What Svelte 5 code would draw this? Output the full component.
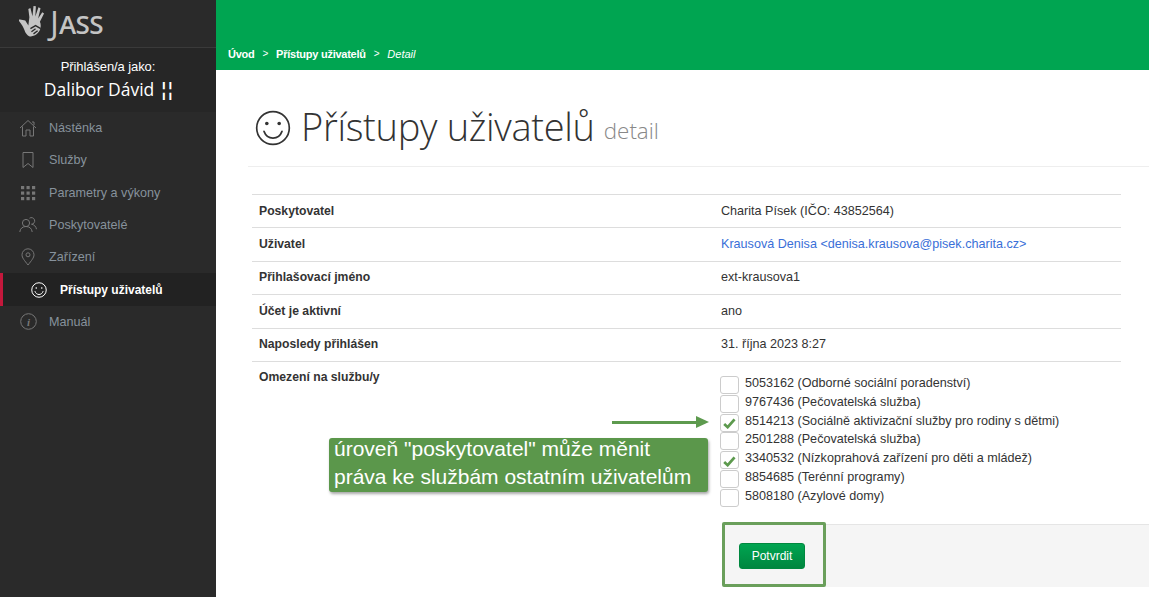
<script>
  const nav = [
    { label: 'Nástěnka', icon: 'home' },
    { label: 'Služby', icon: 'bookmark' },
    { label: 'Parametry a výkony', icon: 'grid' },
    { label: 'Poskytovatelé', icon: 'people' },
    { label: 'Zařízení', icon: 'pin' },
    { label: 'Přístupy uživatelů', icon: 'smile', active: true },
    { label: 'Manuál', icon: 'info' }
  ];
  const rows = [
    ['Poskytovatel', 'Charita Písek (IČO: 43852564)'],
    ['Uživatel', 'Krausová Denisa <denisa.krausova@pisek.charita.cz>', true],
    ['Přihlašovací jméno', 'ext-krausova1'],
    ['Účet je aktivní', 'ano'],
    ['Naposledy přihlášen', '31. října 2023 8:27']
  ];
  const services = [
    ['5053162 (Odborné sociální poradenství)', false],
    ['9767436 (Pečovatelská služba)', false],
    ['8514213 (Sociálně aktivizační služby pro rodiny s dětmi)', true],
    ['2501288 (Pečovatelská služba)', false],
    ['3340532 (Nízkoprahová zařízení pro děti a mládež)', true],
    ['8854685 (Terénní programy)', false],
    ['5808180 (Azylové domy)', false]
  ];
</script>

{#snippet smile(size, sw)}
  <svg width={size} height={size} viewBox="0 0 32 32" fill="none" stroke="currentColor" stroke-width={sw}>
    <circle cx="16" cy="16" r="14.5" />
    <circle cx="10.5" cy="12" r="1.6" fill="currentColor" stroke="none" />
    <circle cx="21.5" cy="12" r="1.6" fill="currentColor" stroke="none" />
    <path d="M8 19c1.5 4 4.5 6 8 6s6.5-2 8-6" stroke-linecap="round" />
  </svg>
{/snippet}

{#snippet navIcon(name)}
  {#if name === 'home'}
    <svg width="18" height="18" viewBox="0 0 18 18" fill="none" stroke="currentColor"><path d="M1 9 9 1.500 17 9M3.500 7.500v9.500h3.500v-6h4v6h3.500V7.500M13 3h2v3" /></svg>
  {:else if name === 'bookmark'}
    <svg width="18" height="18" viewBox="0 0 18 18" fill="none" stroke="currentColor"><path d="M4 1.500h10v15l-5-4-5 4z" /></svg>
  {:else if name === 'grid'}
    <svg width="16" height="16" viewBox="0 0 16 16" fill="currentColor">
      {#each [1, 6.5, 12] as y}
        {#each [1, 6.5, 12] as x}
          <rect {x} {y} width="3.2" height="3.2" />
        {/each}
      {/each}
    </svg>
  {:else if name === 'people'}
    <svg width="18" height="18" viewBox="0 0 18 18" fill="none" stroke="currentColor"><circle cx="7" cy="7" r="3.6" /><path d="M.8 16c.3-3.500 2.800-5.500 6.200-5.500s5.900 2 6.200 5.500M10.500 2.200a3.300 3.300 0 1 1 2 6c2.700.5 4.500 2.200 5 5" /></svg>
  {:else if name === 'pin'}
    <svg width="18" height="18" viewBox="0 0 18 18" fill="none" stroke="currentColor"><path d="M9 17C5.500 12.500 3 9.800 3 6.800a6 6 0 0 1 12 0c0 3-2.500 5.700-6 10.200z" /><circle cx="9" cy="6.800" r="2" /></svg>
  {:else if name === 'smile'}
    {@render smile(16, 2)}
  {:else}
    <svg width="17" height="17" viewBox="0 0 17 17" fill="none" stroke="currentColor"><circle cx="8.500" cy="8.500" r="7.800" /><text x="8.500" y="12.500" text-anchor="middle" font-family="Liberation Serif, serif" font-style="italic" font-weight="700" font-size="11" fill="currentColor" stroke="none">i</text></svg>
  {/if}
{/snippet}

<div class="page">
  <aside class="sidebar">
    <div class="logo">
      <svg class="hand" width="29" height="33" viewBox="0 0 28 32" fill="#c4c4c4">
        <path d="M1 13l5 1 3 5 1-8-1-8 2-1 2 8 1-10 2.300.300-.500 10 3-9 2 .800-2.300 10 4-6 1.700 1.200-4 8c1.500 3 1 8-2 11-2.500 3-6 3.500-8.500 3-2-1-3.500-3-4.500-6-1-3-3-6-6.200-10z" />
        <path d="M11 22l5-3 5 3M12 25l4-3M14 27l4-3" fill="none" stroke="#2a2a2a" stroke-width="1.300" />
      </svg>
      <span class="logo-j">J</span><span class="logo-text">ASS</span>
    </div>
    <div class="who">
      <div class="who-label">Přihlášen/a jako:</div>
      <div class="who-name">Dalibor Dávid <span class="dashes">¦¦</span></div>
    </div>
    <nav>
      {#each nav as item}
        <div class="nav-item" class:active={item.active}>
          <span class="nav-icon">{@render navIcon(item.icon)}</span>
          <span>{item.label}</span>
        </div>
      {/each}
    </nav>
  </aside>

  <main>
    <header class="topbar">
      <div class="crumbs">
        <b>Úvod</b><span class="sep">&gt;</span><b>Přístupy uživatelů</b><span class="sep">&gt;</span><i>Detail</i>
      </div>
    </header>

    <div class="content">
      <div class="title-row">
        <span class="title-icon">{@render smile(36, 1.5)}</span>
        <h1>Přístupy uživatelů</h1>
        <small>detail</small>
      </div>

      <div class="table">
        {#each rows as row}
          <div class="row">
            <div class="th">{row[0]}</div>
            <div class="td" class:link={row[2]}>{row[1]}</div>
          </div>
        {/each}
        <div class="row last">
          <div class="th">Omezení na službu/y</div>
          <div class="td services">
            {#each services as s}
              <div class="service">
                <span class="check">
                  {#if s[1]}
                    <svg width="13" height="11" viewBox="0 0 14 12" fill="none" stroke="#5d9a4e" stroke-width="3"><path d="M1.200 6.500 5 10l7.500-8.500" /></svg>
                  {/if}
                </span>
                <span class="service-text">{s[0]}</span>
              </div>
            {/each}
          </div>
        </div>
      </div>

      <div class="actions">
        <button>Potvrdit</button>
      </div>
    </div>

    <div class="arrow"></div>
    <div class="note"><div class="note-text">úroveň "poskytovatel" může měnit<br />práva ke službám ostatním uživatelům</div></div>
    <div class="highlight"></div>
  </main>
</div>

<style>
  :global(body) {
    margin: 0;
    background: #fff;
  }
  .page {
    display: flex;
    width: 1149px;
    height: 597px;
    overflow: hidden;
    font-family: "Liberation Sans", Arial, sans-serif;
    font-size: 12.6px;
    color: #333;
  }
  .sidebar {
    width: 216px;
    flex: none;
    background: #2a2a2a;
  }
  .logo {
    height: 48px;
    display: flex;
    align-items: center;
    padding: 0 0 3px 19px;
    box-sizing: border-box;
    border-bottom: 1px solid #3a3a3a;
    color: #c4c4c4;
    font-family: "Open Sans", sans-serif;
  }
  .hand {
    margin-right: 2px;
  }
  .logo-j {
    font-size: 33px;
    line-height: 1;
  }
  .logo-text {
    font-size: 26px;
    font-weight: 600;
    line-height: 1;
    letter-spacing: -0.5px;
    margin-top: 3px;
  }
  .who {
    height: 64px;
    box-sizing: border-box;
    padding-top: 11px;
    text-align: center;
    color: #fff;
    background: #262626;
  }
  .who-label {
    font-size: 13px;
    line-height: 15px;
    letter-spacing: -0.1px;
  }
  .who-name {
    font-family: "Open Sans", sans-serif;
    font-size: 17.5px;
    line-height: 26px;
    margin-top: 2px;
  }
  .dashes {
    letter-spacing: -3px;
    font-weight: 700;
    color: #fff;
  }
  .nav-item {
    height: 32.3px;
    display: flex;
    align-items: center;
    padding-left: 19px;
    color: #87929c;
    box-sizing: border-box;
    position: relative;
  }
  .nav-icon {
    width: 18px;
    display: flex;
    justify-content: center;
    margin-right: 12px;
    color: #777;
  }
  .nav-item.active {
    background: #222;
    color: #fff;
    font-weight: 700;
    font-size: 12px;
    padding-left: 30px;
  }
  .nav-item.active::before {
    content: "";
    position: absolute;
    left: 0;
    top: 0;
    bottom: 0;
    width: 3px;
    background: #c4183c;
  }
  .nav-item.active .nav-icon {
    color: #fff;
    margin-right: 12px;
  }
  main {
    flex: 1;
    position: relative;
    min-width: 0;
  }
  .topbar {
    height: 70px;
    background: #00a551;
    display: flex;
    align-items: flex-end;
    box-sizing: border-box;
    padding: 0 0 9px 12px;
  }
  .crumbs {
    color: #fff;
    font-size: 11px;
    line-height: 14px;
    display: flex;
    letter-spacing: -0.25px;
  }
  .crumbs i {
    letter-spacing: 0;
  }
  .sep {
    margin: 0 8px;
    font-size: 10px;
  }
  .content {
    padding: 29px 0 0 32px;
  }
  .title-row {
    height: 67px;
    border-bottom: 1px solid #eee;
    display: flex;
    align-items: flex-start;
    padding-left: 7px;
    color: #333;
  }
  .title-icon {
    margin-top: 11px;
    margin-right: 10px;
    display: flex;
  }
  h1 {
    margin: 0;
    font-family: "Open Sans", sans-serif;
    font-weight: 300;
    font-size: 38px;
    line-height: 54px;
    letter-spacing: -0.3px;
  }
  small {
    font-family: "Open Sans", sans-serif;
    font-weight: 300;
    font-size: 22.4px;
    color: #888;
    margin: 17px 0 0 9px;
    line-height: 30px;
  }
  .table {
    margin: 27px 28px 0 4px;
    border-top: 1px solid #ddd;
  }
  .row {
    display: flex;
    height: 33.4px;
    box-sizing: border-box;
    border-bottom: 1px solid #ddd;
    align-items: center;
    padding-bottom: 1px;
  }
  .row.last {
    height: auto;
    border-bottom: 0;
    align-items: flex-start;
    padding-bottom: 0;
  }
  .th {
    width: 462px;
    padding-left: 7px;
    box-sizing: border-box;
    font-weight: 700;
    font-size: 12.2px;
    flex: none;
    color: #333;
  }
  .last .th {
    padding-top: 8px;
  }
  .td {
    padding-left: 7px;
  }
  .link {
    color: #3a6fd8;
  }
  .services {
    padding: 14px 0 0 6px;
  }
  .service {
    display: flex;
    height: 18.8px;
    align-items: flex-start;
  }
  .check {
    width: 19px;
    height: 18px;
    border: 1px solid #ccc;
    border-radius: 3px;
    background: #fff;
    box-sizing: border-box;
    display: flex;
    align-items: center;
    justify-content: center;
    flex: none;
    margin-right: 5px;
    padding-top: 2px;
  }
  .service-text {
    line-height: 14px;
    color: #333;
    margin-left: 1px;
  }
  .actions {
    margin: 16px 0 0 475px;
    height: 63px;
    background: #f5f5f5;
    border-top: 1px solid #e5e5e5;
    box-sizing: border-box;
    padding: 18px 0 0 16px;
  }
  button {
    display: block;
    width: 66px;
    height: 26px;
    padding: 0;
    border: 1px solid #00883f;
    border-radius: 3px;
    background: linear-gradient(#00a551, #00863f);
    color: #fff;
    font: 12px "Liberation Sans", Arial, sans-serif;
  }
  .arrow {
    position: absolute;
    left: 396px;
    top: 421px;
    width: 85px;
    height: 3px;
    background: #5d9a4e;
  }
  .arrow::after {
    content: "";
    position: absolute;
    left: 84px;
    top: -5px;
    border-left: 13px solid #5d9a4e;
    border-top: 6.500px solid transparent;
    border-bottom: 6.500px solid transparent;
  }
  .note {
    position: absolute;
    left: 113px;
    top: 438px;
    width: 379px;
    height: 54px;
    padding: 0 0 0 5px;
    box-sizing: border-box;
    background: #5b974b;
    border-radius: 3px;
    color: #fff;
    font-size: 21px;
    line-height: 27.5px;
    box-shadow: 1px 2px 3px rgba(0, 0, 0, 0.35);
    white-space: nowrap;
  }
  .note-text {
    margin-top: -3px;
  }
  .highlight {
    position: absolute;
    left: 506px;
    top: 522px;
    width: 104px;
    height: 65px;
    box-sizing: border-box;
    border: 3px solid #6a9f5b;
    border-radius: 2px;
  }
</style>
